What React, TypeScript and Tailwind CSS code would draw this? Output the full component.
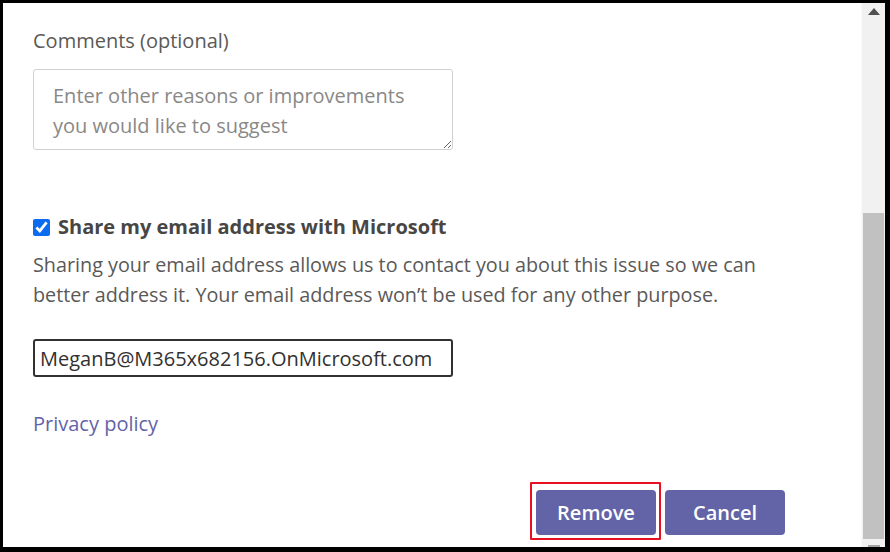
import React from "react";

const font = { fontFamily: '"Open Sans", "Noto Sans", Arial, sans-serif' };

function Scrollbar() {
  return (
    <div className="flex w-[24px] flex-col border-l border-[#f8f8f8] bg-[#f1f1f1]">
      <div className="flex h-[17px] items-center justify-center">
        <svg width="12" height="7" viewBox="0 0 12 7">
          <path d="M6 0 L12 7 L0 7 Z" fill="#505050" />
        </svg>
      </div>
      <div className="mt-[193px] h-[326px] mx-[1px] bg-[#c1c1c1]" />
      <div className="flex flex-1 items-end justify-center">
        <div className="h-[2px] w-[12px] bg-[#a3a3a3]" />
      </div>
    </div>
  );
}

export default function App() {
  return (
    <div
      className="h-[552px] w-[890px] border-b-[5px] border-l-[3px] border-r-[5px] border-t-[3px] border-black bg-white"
      style={font}
    >
      <div className="flex h-full">
        <div className="flex-1 pl-[30px] pr-[24px] text-[20px] text-[#5b5957]">
          <p className="mt-[23px] leading-[30px]">Comments (optional)</p>
          <textarea
            className="mt-[13px] block h-[81px] w-[420px] rounded-[3px] border border-[#d1d1d1] pl-[19px] pr-[40px] py-[11px] text-[20px] leading-[30px] outline-none placeholder:text-[#8a8886]"
            placeholder="Enter other reasons or improvements you would like to suggest"
          />

          <label className="mt-[62px] flex items-center gap-[8px] leading-[30px]">
            <input
              type="checkbox"
              defaultChecked
              className="h-[17px] w-[17px] accent-[#0b6cf0]"
            />
            <span className="font-bold text-[#484644]">
              Share my email address with Microsoft
            </span>
          </label>
          <p className="mt-[8px] w-[750px] text-[19.8px] leading-[30px]">
            Sharing your email address allows us to contact you about this issue so we can better address it. Your email address won’t be used for any other purpose.
          </p>

          <input
            readOnly
            value="MeganB@M365x682156.OnMicrosoft.com"
            className="mt-[29px] block h-[38px] w-[420px] rounded-[3px] border-2 border-[#323130] px-[5px] text-[20px] text-[#323130] outline-none"
          />

          <a className="mt-[32px] block leading-[30px] text-[#6264a7]" href="#">
            Privacy policy
          </a>

          <div className="mt-[43px] flex items-start justify-end gap-[4px] pr-[52px]">
            <div className="rounded-[1px] border-2 border-[#e81123] pb-[3px] pl-[4px] pr-[3px] pt-[6px]">
              <button className="block h-[45px] w-[120px] rounded-[4px] bg-[#6264a7] text-[20px] font-semibold text-white">
                Remove
              </button>
            </div>
            <button className="mt-[8px] block h-[45px] w-[120px] rounded-[4px] bg-[#6264a7] text-[20px] font-semibold text-white">
              Cancel
            </button>
          </div>
        </div>
        <Scrollbar />
      </div>
    </div>
  );
}
